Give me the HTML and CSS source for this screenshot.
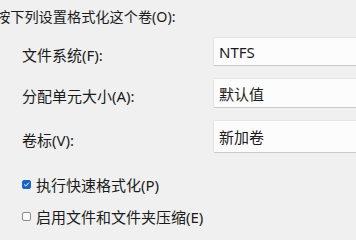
FILE: index.html
```html
<!DOCTYPE html>
<html lang="zh-CN">
<head>
<meta charset="utf-8">
<title>格式化</title>
<link rel="stylesheet" href="styles.css">
</head>
<body>
<div class="dialog">
  <p class="heading">按下列设置格式化这个卷(O):</p>
  <div class="fields">
    <div class="label">文件系统(F):</div>
    <div class="input h1">NTFS</div>
    <div class="label">分配单元大小(A):</div>
    <div class="input h2">默认值</div>
    <div class="label">卷标(V):</div>
    <div class="input h3">新加卷</div>
  </div>
  <div class="options">
    <div class="check">
      <span class="box checked"><svg viewBox="0 0 10 10" width="7" height="7"><path d="M2 5.2 L4.1 7.2 L8 2.8" fill="none" stroke="#fff" stroke-width="1.4" stroke-linecap="round" stroke-linejoin="round"/></svg></span>
      <span>执行快速格式化(P)</span>
    </div>
    <div class="check">
      <span class="box"></span>
      <span>启用文件和文件夹压缩(E)</span>
    </div>
  </div>
</div>
</body>
</html>
```
FILE: styles.css
```css
html, body {
  margin: 0;
  padding: 0;
  background: #f0f0f0;
  overflow: hidden;
}
body {
  font-family: "Noto Sans", "Noto Sans CJK SC", sans-serif;
  font-size: 15px;
  color: #1b1b1b;
  width: 356px;
  height: 231px;
}
.dialog {
  padding: 7px 0 0 22px;
}
.heading {
  margin: 0 0 0 -26px;
  font-size: 14.2px;
  line-height: 20px;
}
.fields {
  margin-top: 10px;
  display: grid;
  grid-template-columns: 191px 1fr;
  row-gap: 12px;
  align-items: center;
}
.label {
  padding-top: 6px;
  line-height: 20px;
}
.input {
  box-sizing: border-box;
  margin-right: -4px;
  background: #fcfcfc;
  border: 1px solid #e4e4e4;
  border-bottom-color: #c9c9c9;
  border-radius: 2px;
  padding-left: 5px;
  display: flex;
  align-items: center;
}
.h1 { height: 29px; }
.h2 { height: 30px; }
.h3 { height: 33px; }
.options {
  margin-top: 15px;
}
.check {
  height: 32px;
  display: flex;
  align-items: center;
  gap: 5px;
}
.box {
  box-sizing: border-box;
  width: 9px;
  height: 9px;
  border: 1px solid #8a8a8a;
  border-radius: 2px;
  background: #fbfbfb;
  display: flex;
  align-items: center;
  justify-content: center;
}
.box.checked {
  background: #1b63c6;
  border-color: #1b63c6;
}
```
